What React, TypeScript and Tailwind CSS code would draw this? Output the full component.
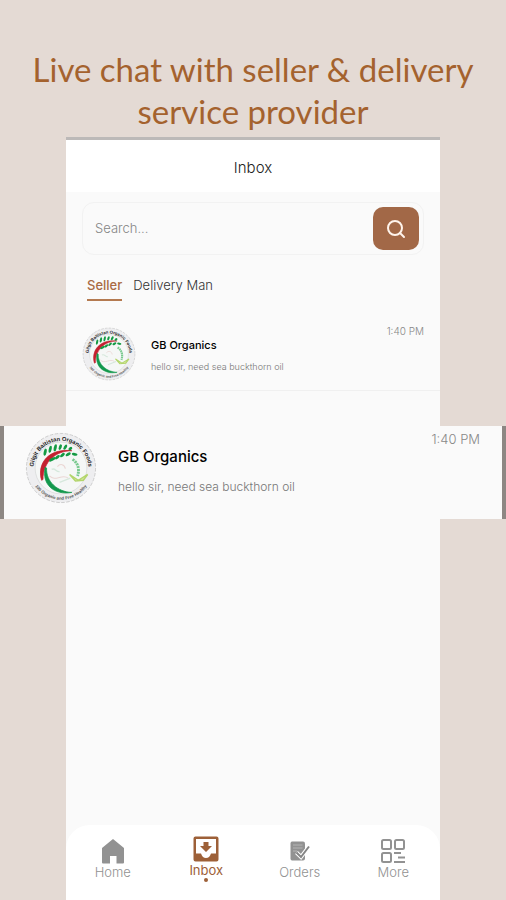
import { useId, useState } from 'react'
import clsx from 'clsx'

type Chat = { name: string; message: string; time: string }

const chat: Chat = {
  name: 'GB Organics',
  message: 'hello sir, need sea buckthorn oil',
  time: '1:40 PM',
}

const SellerLogo = ({ className }: { className: string }) => {
  const id = useId()
  return (
    <svg viewBox="0 0 100 100" className={className} role="img" aria-label="Seller logo">
      <defs>
        <path id={`${id}top`} d="M13 59 A38 38 0 1 1 87 59" />
        <path id={`${id}bottom`} d="M6 50 A44 44 0 0 0 94 50" />
      </defs>
      <circle cx="50" cy="50" r="48" fill="#eeeef0" stroke="#bdbdbd" strokeWidth="1" strokeDasharray="5 2" />
      <circle cx="50" cy="50" r="36" fill="#f5f7f6" stroke="#d6d8d8" strokeWidth="1" />
      <text fontSize="8" fontWeight="700" fill="#222222" fontFamily="Liberation Sans, sans-serif" textAnchor="middle">
        <textPath href={`#${id}top`} startOffset="50%">Gilgit Baltistan Organic Foods</textPath>
      </text>
      <text fontSize="6" fontWeight="700" fill="#555555" fontFamily="Liberation Sans, sans-serif" textAnchor="middle">
        <textPath href={`#${id}bottom`} startOffset="50%">100 Organic and Free Healthy</textPath>
      </text>
      <path d="M23 67 C16 43 34 22 65 26 C43 26 25 41 25 66 Z" fill="#c4202f" stroke="#c4202f" strokeWidth="1" />
      <path d="M28 49 C23 73 40 88 65 84 C45 83 29 69 30 50 Z" fill="#12984c" stroke="#12984c" strokeWidth="1" />
      <g fill="#139a43">
        <ellipse cx="28" cy="28" rx="2" ry="5" transform="rotate(12 28 28)" />
        <ellipse cx="35" cy="24" rx="2" ry="5" transform="rotate(12 35 24)" />
        <ellipse cx="42" cy="22" rx="2" ry="5" transform="rotate(12 42 22)" />
        <ellipse cx="49" cy="21" rx="2" ry="4" transform="rotate(20 49 21)" />
        <ellipse cx="56" cy="21" rx="2" ry="4" transform="rotate(30 56 21)" />
        <ellipse cx="63" cy="23" rx="2" ry="3" transform="rotate(50 63 23)" />
        <ellipse cx="38" cy="38" rx="2" ry="5" transform="rotate(-120 38 38)" />
        <ellipse cx="45" cy="35" rx="2" ry="4" transform="rotate(-130 45 35)" />
        <ellipse cx="52" cy="32" rx="2" ry="4" transform="rotate(-130 52 32)" />
        <ellipse cx="60" cy="31" rx="2" ry="4" transform="rotate(-120 60 31)" />
        <ellipse cx="69" cy="31" rx="2" ry="4" transform="rotate(-80 69 31)" />
      </g>
      <path d="M66 38 C74 43 76 52 73 61" fill="none" stroke="#79c98f" strokeWidth="4" strokeDasharray="3 1" />
      <path d="M62 59 L74 67 L87 59 L81 67 L70 68 Z" fill="#d5e8a0" stroke="#b3d56c" strokeWidth="2" />
      <path d="M34 61 C42 70 52 57 60 64 M45 48 C49 43 55 45 56 51" fill="none" stroke="#ead6d4" strokeWidth="1.5" />
      <path d="M37 52 C42 49 43 56 48 55 M48 70 L63 64" fill="none" stroke="#d6e8dc" strokeWidth="2" />
    </svg>
  )
}

const HomeIcon = () => (
  <svg viewBox="0 0 24 26" className="h-[26px] w-6" fill="currentColor">
    <path d="M12 1 L23 10 V24.5 Q23 25.500 22 25.500 H15.500 V18 H9 V25.500 H2 Q1 25.500 1 24.500 V10 Z" />
  </svg>
)

const InboxIcon = () => (
  <svg viewBox="0 0 26 26" className="h-[26px] w-[26px]" fill="currentColor">
    <path
      fillRule="evenodd"
      d="M2.500 0.500 H23.500 Q25.500 .5 25.500 2.500 V23.500 Q25.500 25.500 23.500 25.500 H2.500 Q.5 25.500 .5 23.500 V2.500 Q.5 .5 2.500 .5 Z M3 3 V17.500 H8 Q9.500 22 13 22 Q16.500 22 18 17.500 H23 V3 Z"
    />
    <path d="M10.500 6 H15.500 V10 H19 L13 16 L7 10 H10.500 Z" />
  </svg>
)

const OrdersIcon = () => (
  <svg viewBox="0 0 22 22" className="h-[22px] w-[22px]">
    <path d="M3 1.500 H14 Q16 1.500 16 3.500 V18.500 Q16 20.500 14 20.500 H3 Q1.500 20.500 1.500 18.500 V3.500 Q1.500 1.500 3 1.500 Z" fill="#929292" />
    <path d="M4 5 H13.500 M4 8 H13.500 M4 11 H8" stroke="#b5b5b5" strokeWidth="1" />
    <path d="M7.500 12.500 L12 17 L20 6.500" fill="none" stroke="#fff" strokeWidth="4" />
    <path d="M7.500 12.500 L12 17 L20 6.500" fill="none" stroke="#858585" strokeWidth="2" />
  </svg>
)

const MoreIcon = () => (
  <svg viewBox="0 0 26 26" className="h-[26px] w-[26px]" fill="none" stroke="currentColor" strokeWidth="2">
    <rect x="2" y="2" width="9" height="9" rx="1.500" />
    <rect x="15" y="2" width="9" height="9" rx="1.500" />
    <rect x="2" y="15" width="9" height="9" rx="1.500" />
    <path d="M14 15 H21 M18 19.500 H25 M14 24 H25" />
  </svg>
)

const SearchIcon = () => (
  <svg viewBox="0 0 20 20" className="h-5 w-5" fill="none" stroke="#fff4ec" strokeWidth="2">
    <circle cx="9" cy="9" r="7" />
    <path d="M14 14 L18 18" strokeLinecap="round" />
  </svg>
)

const navItems = [
  { label: 'Home', Icon: HomeIcon },
  { label: 'Inbox', Icon: InboxIcon },
  { label: 'Orders', Icon: OrdersIcon },
  { label: 'More', Icon: MoreIcon },
]

const tabs = ['Seller', 'Delivery Man']

const App = () => {
  const [tab, setTab] = useState('Seller')
  const [search, setSearch] = useState('')

  return (
    <main className="flex min-h-screen flex-col overflow-x-hidden bg-[#e4dad4] font-[Inter,sans-serif]">
      <h1 className="px-4 pt-12 pb-[5px] text-center font-[Lato,sans-serif] text-[33px] leading-[42px] text-[#a4622e]">
        Live chat with seller & delivery service provider
      </h1>

      <section className="mx-[66px] flex grow flex-col border-t-[3px] border-[#bcb9b8] bg-[#fafafa]">
        <header className="flex h-[52px] items-center justify-center bg-white pt-1">
          <h2 className="text-[15px] font-light text-[#222]">Inbox</h2>
        </header>

        <form
          onSubmit={(e) => e.preventDefault()}
          className="mx-4 mt-[10px] flex h-[53px] items-center rounded-xl border border-[#f2f2f2] pr-1 pl-3"
        >
          <input
            type="text"
            aria-label="Search"
            placeholder="Search..."
            value={search}
            onChange={(e) => setSearch(e.target.value)}
            className="min-w-0 grow bg-transparent text-[13px] font-light text-[#333] outline-none placeholder:text-[#858585]"
          />
          <button
            type="submit"
            aria-label="Submit search"
            className="flex h-[43px] w-[46px] items-center justify-center rounded-[10px] bg-[#a26847]"
          >
            <SearchIcon />
          </button>
        </form>

        <div className="mt-5 flex gap-[11px] px-[21px]">
          {tabs.map((name) => (
            <button
              key={name}
              onClick={() => setTab(name)}
              className={clsx(
                'border-b-2 pb-1 text-[13px] leading-5',
                tab === name
                  ? 'border-[#b47a50] font-medium text-[#a96a43]'
                  : 'border-transparent font-light text-[#333]',
              )}
            >
              {name}
            </button>
          ))}
        </div>

        <article className="mt-5 flex h-[70px] items-start border-b border-[#f0f0f0] px-4">
          <SellerLogo className="mt-[6px] h-[54px] w-[54px] shrink-0" />
          <div className="grow pt-[14px] pl-[15px]">
            <h3 className="text-[11px] leading-5 font-medium text-black">{chat.name}</h3>
            <p className="pt-[2px] text-[9px] leading-5 font-light text-[#777]">{chat.message}</p>
          </div>
          <time className="text-[10px] leading-5 font-light text-[#888]">{chat.time}</time>
        </article>

        <article className="-mx-[66px] mt-[35px] flex h-[93px] items-start border-x-4 border-[#8d8783] bg-[#fafafa] pr-[22px] pl-[21px]">
          <SellerLogo className="mt-[6px] h-[72px] w-[72px] shrink-0" />
          <div className="grow pt-[21px] pl-[21px]">
            <h3 className="text-[15px] leading-5 font-medium text-black">{chat.name}</h3>
            <p className="pt-[10px] text-xs leading-5 font-light text-[#777]">{chat.message}</p>
          </div>
          <time className="pt-[3px] text-[13px] leading-5 font-light text-[#888]">{chat.time}</time>
        </article>

        <nav className="mt-auto grid h-[75px] grid-cols-4 rounded-t-3xl bg-white">
          {navItems.map(({ label, Icon }) => {
            const active = label === 'Inbox'
            return (
              <a
                key={label}
                href={`#${label.toLowerCase()}`}
                aria-current={active ? 'page' : undefined}
                className={clsx(
                  'flex flex-col items-center text-[13px] leading-4',
                  active ? 'pt-[10px] text-[#9d6038]' : 'pt-3 font-light text-[#929292]',
                )}
              >
                <span className="flex h-[27px] items-center">
                  <Icon />
                </span>
                {label}
                {active && <span className="h-1 w-1 rounded-full bg-[#9d6038]" />}
              </a>
            )
          })}
        </nav>
      </section>
    </main>
  )
}

export default App
